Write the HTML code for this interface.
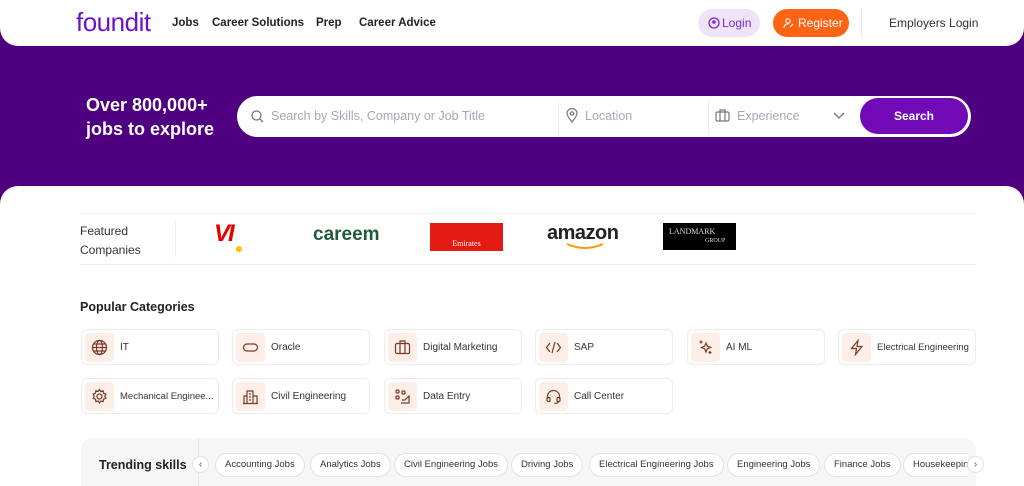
<!DOCTYPE html>
<html><head><style>
*{box-sizing:border-box;margin:0;padding:0}
body{width:1024px;height:486px;overflow:hidden;background:#fff;font-family:"Liberation Sans",sans-serif;position:relative;color:#222}
.abs{position:absolute}
.hdr{left:0;top:0;width:1024px;height:46px;background:#fff;border-radius:0 0 18px 18px;z-index:2}
.purple{left:0;top:20px;width:1024px;height:185px;background:#4f0080;z-index:1}
.body{left:0;top:186px;width:1024px;height:300px;background:#fff;border-radius:18px 18px 0 0;z-index:2}
.nav{top:17px;font-size:11.5px;font-weight:bold;color:#222;white-space:nowrap}
.card{width:138px;height:36px;border:1px solid #ececec;border-radius:6px;background:#fff}
.card .ic{position:absolute;left:3px;top:3px;width:29px;height:29px;background:#fdeee8;border-radius:4px}
.card .ic svg{position:absolute;left:6px;top:6px}
.card span{position:absolute;left:38px;top:12px;font-size:10px;color:#333;white-space:nowrap}
.chip{height:24px;border:1px solid #e2e2e2;border-radius:12px;background:#fff;font-size:9.5px;color:#333;line-height:22px;padding:0 9px;white-space:nowrap}
</style></head><body>
<div class="abs hdr">
 <div class="abs" style="left:76px;top:7px;font-size:26px;color:#6e12c9;letter-spacing:-0.5px">foundit</div>
 <div class="abs nav" style="left:172px">Jobs</div>
 <div class="abs nav" style="left:212px">Career Solutions</div>
 <div class="abs nav" style="left:316px">Prep</div>
 <div class="abs nav" style="left:359px">Career Advice</div>
 <div class="abs" style="left:698px;top:9px;width:62px;height:28px;border-radius:14px;background:#efe3f8;color:#7a2ad1;font-size:12px;line-height:28px;padding-left:24px">Login
  <svg class="abs" style="left:10px;top:8px" width="12" height="12" viewBox="0 0 12 12"><circle cx="6" cy="6" r="5" fill="none" stroke="#7a2ad1" stroke-width="1.3"/><circle cx="6" cy="5" r="1.8" fill="#7a2ad1"/></svg></div>
 <div class="abs" style="left:773px;top:9px;width:76px;height:28px;border-radius:14px;background:#ff6414;color:#fff;font-size:12px;line-height:28px;padding-left:25px">Register
  <svg class="abs" style="left:10px;top:8px" width="12" height="12" viewBox="0 0 12 12"><circle cx="5" cy="4" r="2.2" fill="none" stroke="#fff" stroke-width="1.1"/><path d="M1 11c0-3 2-4 4-4M7 10l3-3" stroke="#fff" stroke-width="1.1" fill="none"/></svg></div>
 <div class="abs" style="left:861px;top:9px;width:1px;height:28px;background:#e6e6e6"></div>
 <div class="abs" style="left:889px;top:16px;font-size:12px;color:#333">Employers Login</div>
</div>
<div class="abs purple">
 <div class="abs" style="left:86px;top:73px;color:#fff;font-size:18px;font-weight:bold;line-height:24px">Over 800,000+<br>jobs to explore</div>
 <div class="abs" style="left:237px;top:76px;width:734px;height:41px;background:#fff;border-radius:21px">
  <svg class="abs" style="left:14px;top:14px" width="13" height="13" viewBox="0 0 13 13"><circle cx="5.5" cy="5.5" r="4.5" fill="none" stroke="#777" stroke-width="1.3"/><path d="M9 9l3 3" stroke="#777" stroke-width="1.3"/></svg>
  <div class="abs" style="left:34px;top:13px;font-size:12.5px;color:#a8a8b4">Search by Skills, Company or Job Title</div>
  <div class="abs" style="left:321px;top:3px;width:1px;height:35px;background:#eee"></div>
  <svg class="abs" style="left:329px;top:12px" width="12" height="15" viewBox="0 0 12 15"><path d="M6 14C2 9 1 7 1 5.5a5 5 0 0110 0C11 7 10 9 6 14z" fill="none" stroke="#777" stroke-width="1.2"/><circle cx="6" cy="5.5" r="1.7" fill="none" stroke="#777" stroke-width="1.2"/></svg>
  <div class="abs" style="left:348px;top:13px;font-size:12.5px;color:#a8a8b4">Location</div>
  <div class="abs" style="left:471px;top:3px;width:1px;height:35px;background:#eee"></div>
  <svg class="abs" style="left:478px;top:13px" width="15" height="13" viewBox="0 0 15 13"><rect x="1" y="3" width="13" height="9" rx="1.5" fill="none" stroke="#777" stroke-width="1.2"/><path d="M5 3V1h5v2M5 3v9M10 3v9" stroke="#777" stroke-width="1.2" fill="none"/></svg>
  <div class="abs" style="left:500px;top:13px;font-size:12.5px;color:#a8a8b4">Experience</div>
  <svg class="abs" style="left:596px;top:16px" width="12" height="8" viewBox="0 0 12 8"><path d="M1 1l5 5 5-5" stroke="#777" stroke-width="1.3" fill="none"/></svg>
  <div class="abs" style="left:623px;top:2px;width:108px;height:36px;background:#7209b7;border-radius:18px;color:#fff;font-weight:bold;font-size:12px;text-align:center;line-height:36px">Search</div>
 </div>
</div>
<div class="abs body">
 <div class="abs" style="left:80px;top:27px;width:896px;height:1px;background:#eee"></div>
 <div class="abs" style="left:80px;top:78px;width:896px;height:1px;background:#eee"></div>
 <div class="abs" style="left:80px;top:36px;font-size:12px;line-height:19px;color:#333">Featured<br>Companies</div>
 <div class="abs" style="left:175px;top:35px;width:1px;height:36px;background:#eee"></div>
 <div class="abs" style="left:214px;top:34px;font-size:24px;font-weight:bold;color:#e60000;font-style:italic;letter-spacing:-2px">VI</div>
 <div class="abs" style="left:236px;top:60px;width:6px;height:6px;border-radius:3px;background:#f7c600"></div>
 <div class="abs" style="left:313px;top:38px;font-size:19px;font-weight:bold;color:#1f5c3e">careem</div>
 <div class="abs" style="left:430px;top:37px;width:73px;height:28px;background:#e41b13;color:#fff;font-family:'Liberation Serif',serif;font-size:8px;text-align:center;padding-top:16px">Emirates</div>
 <div class="abs" style="left:547px;top:36px;font-size:20px;font-weight:bold;color:#222;letter-spacing:-0.5px">amazon</div>
 <svg class="abs" style="left:566px;top:57px" width="40" height="8" viewBox="0 0 40 8"><path d="M1 1q18 8 36 0" stroke="#f90" stroke-width="2" fill="none"/></svg>
 <div class="abs" style="left:663px;top:37px;width:73px;height:27px;background:#000;color:#ddd;font-family:'Liberation Serif',serif;font-size:8px;padding:5px 0 0 6px;line-height:8px">LANDMARK<br><span style="margin-left:36px;font-size:6px">GROUP</span></div>
 <div class="abs" style="left:80px;top:114px;font-size:12.5px;font-weight:bold;color:#222">Popular Categories</div>
</div>
<div style="z-index:3;position:absolute;left:0;top:0">
 <div class="abs card" style="left:81px;top:329px"><div class="ic"><svg width="17" height="17" viewBox="0 0 17 17" fill="none" stroke="#7a3a26" stroke-width="1.2"><circle cx="8.5" cy="8.5" r="7"/><ellipse cx="8.5" cy="8.5" rx="3" ry="7"/><path d="M1.5 8.5h14M2.5 5h12M2.5 12h12"/></svg></div><span>IT</span></div>
 <div class="abs card" style="left:232px;top:329px"><div class="ic"><svg width="17" height="17" viewBox="0 0 17 17" fill="none" stroke="#7a3a26" stroke-width="1.2"><rect x="1.5" y="5" width="14" height="7" rx="3.5"/></svg></div><span>Oracle</span></div>
 <div class="abs card" style="left:384px;top:329px"><div class="ic"><svg width="17" height="17" viewBox="0 0 17 17" fill="none" stroke="#7a3a26" stroke-width="1.2"><rect x="1.5" y="4.5" width="14" height="10" rx="1.5"/><path d="M6 4.5V2h5v2.5M6 4.5v10M11 4.5v10"/></svg></div><span>Digital Marketing</span></div>
 <div class="abs card" style="left:535px;top:329px"><div class="ic"><svg width="17" height="17" viewBox="0 0 17 17" fill="none" stroke="#7a3a26" stroke-width="1.2"><path d="M5 4L1.5 8.5 5 13M12 4l3.5 4.5L12 13M10 3L7 14"/></svg></div><span>SAP</span></div>
 <div class="abs card" style="left:687px;top:329px"><div class="ic"><svg width="17" height="17" viewBox="0 0 17 17" fill="none" stroke="#7a3a26" stroke-width="1.2"><path d="M9 4l1.3 3.2L13.5 8.5 10.3 9.8 9 13 7.7 9.8 4.5 8.5 7.7 7.2z"/><path d="M4 1.5v3M2.5 3h3M13 12v3M11.5 13.5h3"/></svg></div><span>AI ML</span></div>
 <div class="abs card" style="left:838px;top:329px"><div class="ic"><svg width="17" height="17" viewBox="0 0 17 17" fill="none" stroke="#7a3a26" stroke-width="1.2"><path d="M10 1.5L3.5 9.5h5l-1 6 6.5-8h-5z"/></svg></div><span style="font-size:9.5px">Electrical Engineering</span></div>
 <div class="abs card" style="left:81px;top:378px"><div class="ic"><svg width="17" height="17" viewBox="0 0 17 17" fill="none" stroke="#7a3a26" stroke-width="1.2"><circle cx="8.5" cy="8.5" r="2.5"/><path d="M8.5 1.5l1.3 2 2.3-.7.4 2.4 2.3.8-1 2.2 1 2.2-2.3.8-.4 2.4-2.3-.7-1.3 2-1.3-2-2.3.7-.4-2.4-2.3-.8 1-2.2-1-2.2 2.3-.8.4-2.4 2.3.7z"/></svg></div><span style="font-size:9.5px">Mechanical Enginee...</span></div>
 <div class="abs card" style="left:232px;top:378px"><div class="ic"><svg width="17" height="17" viewBox="0 0 17 17" fill="none" stroke="#7a3a26" stroke-width="1.2"><path d="M5 15.5V3h6v12.5M2 15.5V8h3M11 8h4v7.5M1 15.5h15M7 6h2M7 9h2M7 12h2"/></svg></div><span>Civil Engineering</span></div>
 <div class="abs card" style="left:384px;top:378px"><div class="ic"><svg width="17" height="17" viewBox="0 0 17 17" fill="none" stroke="#7a3a26" stroke-width="1.2"><rect x="2" y="2" width="3" height="3" rx="1"/><rect x="2" y="8" width="3" height="3" rx="1"/><rect x="8" y="3" width="3" height="3" rx="1"/><path d="M7 15h8V8l-4 4H8"/></svg></div><span>Data Entry</span></div>
 <div class="abs card" style="left:535px;top:378px"><div class="ic"><svg width="17" height="17" viewBox="0 0 17 17" fill="none" stroke="#7a3a26" stroke-width="1.2"><path d="M2.5 11V8.5a6 6 0 0112 0V11"/><rect x="2" y="9.5" width="3" height="4" rx="1"/><rect x="12" y="9.5" width="3" height="4" rx="1"/><path d="M13.5 13.5q0 2-4 2"/></svg></div><span>Call Center</span></div>

 <div class="abs" style="left:81px;top:438px;width:895px;height:48px;background:#f6f6f6;border-radius:12px 12px 0 0"></div>
 <div class="abs" style="left:198px;top:438px;width:1px;height:48px;background:#e8e8e8"></div>
 <div class="abs" style="left:99px;top:458px;font-size:12.5px;font-weight:bold;color:#222;white-space:nowrap">Trending skills</div>
 <div class="abs" style="left:192px;top:456px;width:17px;height:17px;border-radius:9px;background:#fff;border:1px solid #e2e2e2;font-size:10px;text-align:center;line-height:15px;color:#555">&lsaquo;</div>
 <div class="abs" style="left:214px;top:438px;width:754px;height:48px;overflow:hidden">
  <div class="abs chip" style="left:1px;top:15px">Accounting Jobs</div>
  <div class="abs chip" style="left:96px;top:15px">Analytics Jobs</div>
  <div class="abs chip" style="left:180px;top:15px">Civil Engineering Jobs</div>
  <div class="abs chip" style="left:297px;top:15px">Driving Jobs</div>
  <div class="abs chip" style="left:375px;top:15px">Electrical Engineering Jobs</div>
  <div class="abs chip" style="left:513px;top:15px">Engineering Jobs</div>
  <div class="abs chip" style="left:610px;top:15px">Finance Jobs</div>
  <div class="abs chip" style="left:689px;top:15px">Housekeeping Jobs</div>
 </div>
 <div class="abs" style="left:967px;top:456px;width:17px;height:17px;border-radius:9px;background:#fff;border:1px solid #e2e2e2;font-size:10px;text-align:center;line-height:15px;color:#555">&rsaquo;</div>
</div>
</body></html>
